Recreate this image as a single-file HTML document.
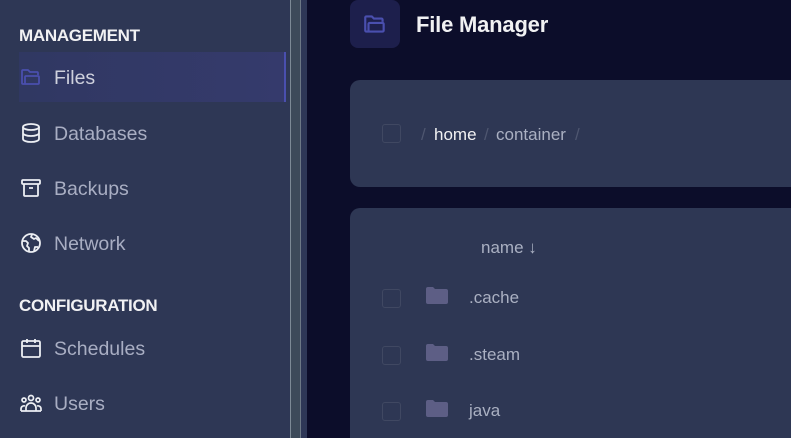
<!DOCTYPE html>
<html><head><style>
*{margin:0;padding:0;box-sizing:border-box}
html,body{width:791px;height:438px;overflow:hidden}
body{background:#0c0d2a;font-family:"Liberation Sans",sans-serif;position:relative}
.sb{position:absolute;left:0;top:0;width:291px;height:438px;background:#2e3755}
.l1{position:absolute;left:290px;top:0;width:1px;height:438px;background:#7d8a96}
.tr{position:absolute;left:291px;top:0;width:9px;height:438px;background:#3d4a5a}
.l2{position:absolute;left:300px;top:0;width:1px;height:438px;background:#6c7886}
.tr2{position:absolute;left:301px;top:0;width:6px;height:438px;background:#2e3757}
.h{position:absolute;left:19px;color:#f1f1f3;font-weight:bold;font-size:17px;letter-spacing:-0.3px}
.it{position:absolute;left:19px;height:50px;width:267px;display:flex;align-items:center;color:#a9aec3;font-size:19.5px;padding-top:3px}
.it svg{width:24px;height:24px;margin-right:11px;flex:none;margin-top:-3px}
.act{background:linear-gradient(90deg,#303862,#353a6c);border-right:2px solid #4a4fae;color:#cfd1dd}
.card{position:absolute;left:350px;width:460px;background:#2e3754;border-radius:10px}
.cb{position:absolute;width:19px;height:19px;border:1px solid #404862;border-radius:3px}
.t{position:absolute;font-size:17px;color:#aab0c2}
.fd{position:absolute;left:426px;width:22px;height:17px}
</style></head><body>
<div class="sb"></div><div class="l1"></div><div class="tr"></div><div class="l2"></div><div class="tr2"></div>
<div class="h" style="top:26px">MANAGEMENT</div>
<div class="it act" style="top:52px"><svg viewBox="0 0 24 24" fill="none" stroke="#4a4fae" stroke-width="1.8" stroke-linejoin="round"><path d="M3 18V6a1 1 0 0 1 1-1h5l2 2h7a1 1 0 0 1 1 1v2"/><path d="M5 19h14a1 1 0 0 0 1-1v-6a1 1 0 0 0-1-1H7a1 1 0 0 0-1 1v7H4a1 1 0 0 1-1-1"/></svg>Files</div>
<div class="it" style="top:108px"><svg viewBox="0 0 24 24" fill="none" stroke="#eceef3" stroke-width="1.8"><ellipse cx="12" cy="6" rx="8" ry="3"/><path d="M4 6v12c0 1.7 3.6 3 8 3s8-1.3 8-3V6M4 12c0 1.7 3.6 3 8 3s8-1.3 8-3"/></svg>Databases</div>
<div class="it" style="top:163px"><svg viewBox="0 0 24 24" fill="none" stroke="#eceef3" stroke-width="1.8" stroke-linejoin="round"><rect x="3" y="4" width="18" height="4" rx="1"/><path d="M5 8v11a1 1 0 0 0 1 1h12a1 1 0 0 0 1-1V8M10 12h4"/></svg>Backups</div>
<div class="it" style="top:218px"><svg viewBox="0 0 24 24" fill="none" stroke="#eceef3" stroke-width="1.8" stroke-linejoin="round"><circle cx="12" cy="12" r="9"/><path d="M4 10h3l2 2-1 3 2 2v4M13 3.5l-1 2.5 3 2 2-1 3 3M15 20l1-4h3"/></svg>Network</div>
<div class="h" style="top:296px">CONFIGURATION</div>
<div class="it" style="top:323px"><svg viewBox="0 0 24 24" fill="none" stroke="#eceef3" stroke-width="1.8"><rect x="3" y="5" width="18" height="16" rx="1.5"/><path d="M8 3v4M16 3v4M3 10h18"/></svg>Schedules</div>
<div class="it" style="top:378px"><svg viewBox="0 0 24 24" fill="none" stroke="#eceef3" stroke-width="1.7"><circle cx="12" cy="7" r="2.5"/><circle cx="5" cy="9" r="2"/><circle cx="19" cy="9" r="2"/><path d="M7 20v-3a5 5 0 0 1 10 0v3zM2 20v-2a3 3 0 0 1 4-3M22 20v-2a3 3 0 0 0-4-3M2 20h20"/></svg>Users</div>

<div style="position:absolute;left:350px;top:0;width:50px;height:48px;background:#1d1f4c;border-radius:8px"></div>
<svg style="position:absolute;left:361px;top:11px" width="28" height="26" viewBox="0 0 24 24" fill="none" stroke="#4a4fae" stroke-width="2" stroke-linejoin="round"><path d="M3 18V6a1 1 0 0 1 1-1h5l2 2h7a1 1 0 0 1 1 1v2"/><path d="M5 19h14a1 1 0 0 0 1-1v-6a1 1 0 0 0-1-1H7a1 1 0 0 0-1 1v7H4a1 1 0 0 1-1-1"/></svg>
<div style="position:absolute;left:416px;top:12px;color:#f1f1f3;font-weight:bold;font-size:22px;letter-spacing:-0.2px">File Manager</div>

<div class="card" style="top:80px;height:107px"></div>
<div class="cb" style="left:382px;top:124px"></div>
<div class="t" style="left:421px;top:125px;color:#4e5670">/</div>
<div class="t" style="left:434px;top:125px;color:#f1f1f3">home</div>
<div class="t" style="left:484px;top:125px;color:#4e5670">/</div>
<div class="t" style="left:496px;top:125px">container</div>
<div class="t" style="left:575px;top:125px;color:#4e5670">/</div>

<div class="card" style="top:208px;height:240px"></div>
<div class="t" style="left:481px;top:238px">name ↓</div>
<div class="cb" style="left:382px;top:289px"></div>
<svg class="fd" style="top:287px" viewBox="0 0 22 17"><path d="M0 2a2 2 0 0 1 2-2h5l2 2h11a2 2 0 0 1 2 2v11a2 2 0 0 1-2 2H2a2 2 0 0 1-2-2z" fill="#5d5e85"/></svg>
<div class="t" style="left:469px;top:288px">.cache</div>
<div class="cb" style="left:382px;top:346px"></div>
<svg class="fd" style="top:344px" viewBox="0 0 22 17"><path d="M0 2a2 2 0 0 1 2-2h5l2 2h11a2 2 0 0 1 2 2v11a2 2 0 0 1-2 2H2a2 2 0 0 1-2-2z" fill="#5d5e85"/></svg>
<div class="t" style="left:469px;top:345px">.steam</div>
<div class="cb" style="left:382px;top:402px"></div>
<svg class="fd" style="top:400px" viewBox="0 0 22 17"><path d="M0 2a2 2 0 0 1 2-2h5l2 2h11a2 2 0 0 1 2 2v11a2 2 0 0 1-2 2H2a2 2 0 0 1-2-2z" fill="#5d5e85"/></svg>
<div class="t" style="left:469px;top:401px">java</div>
</body></html>
